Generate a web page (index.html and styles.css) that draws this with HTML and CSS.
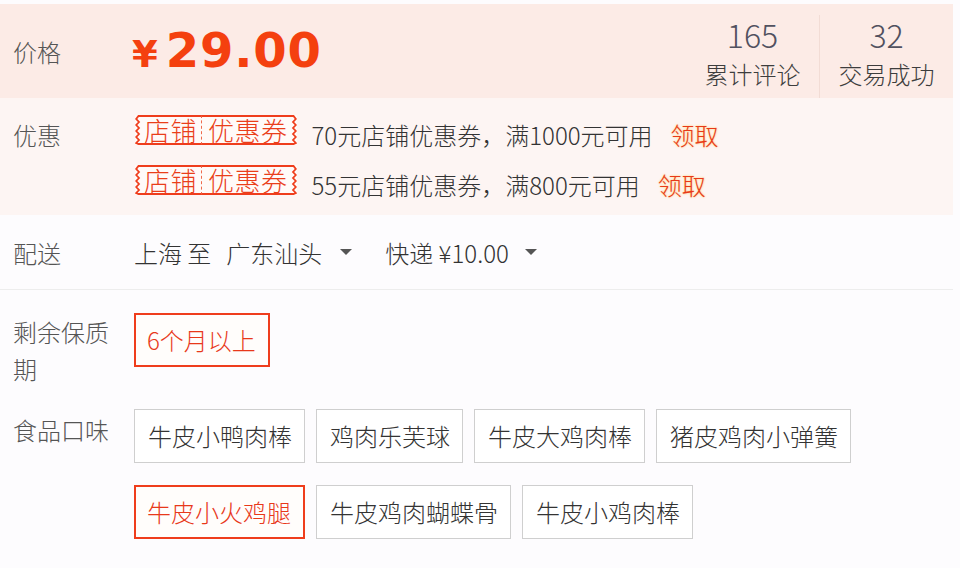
FILE: index.html
```html
<!DOCTYPE html>
<html lang="zh-CN">
<head>
<meta charset="utf-8">
<title>商品详情</title>
<link rel="stylesheet" href="styles.css">
</head>
<body>
<div class="page">
  <section class="panel">
    <div class="row price-row">
      <div class="label">价格</div>
      <div class="price"><span class="yen">¥</span><span class="amount">29.00</span></div>
      <div class="stats">
        <div class="stat"><div class="num">165</div><div class="cap">累计评论</div></div>
        <div class="stat stat-sep"><div class="num">32</div><div class="cap">交易成功</div></div>
      </div>
    </div>
    <div class="row coupon-row">
      <div class="label lh40">优惠</div>
      <div class="coupons">
        <div class="coupon">
          <span class="tag">
            <svg class="edge" width="6" height="30" viewBox="0 0 6 30"><path d="M6 1H3.5L1.2 4 4 7 1.2 10 4 13 1.2 16 4 19 1.2 22 4 25 1.2 28 3.5 29H6" fill="none" stroke="#ef3d1c" stroke-width="1.8"/></svg>
            <span class="tag-a">店铺</span><span class="tag-b">优惠券</span>
            <svg class="edge" width="6" height="30" viewBox="0 0 6 30"><path d="M0 1H2.5L4.8 4 2 7 4.8 10 2 13 4.8 16 2 19 4.8 22 2 25 4.8 28 2.5 29H0" fill="none" stroke="#ef3d1c" stroke-width="1.8"/></svg>
          </span>
          <span class="coupon-text">70元店铺优惠券，满1000元可用</span>
          <span class="take">领取</span>
        </div>
        <div class="coupon">
          <span class="tag">
            <svg class="edge" width="6" height="30" viewBox="0 0 6 30"><path d="M6 1H3.5L1.2 4 4 7 1.2 10 4 13 1.2 16 4 19 1.2 22 4 25 1.2 28 3.5 29H6" fill="none" stroke="#ef3d1c" stroke-width="1.8"/></svg>
            <span class="tag-a">店铺</span><span class="tag-b">优惠券</span>
            <svg class="edge" width="6" height="30" viewBox="0 0 6 30"><path d="M0 1H2.5L4.8 4 2 7 4.8 10 2 13 4.8 16 2 19 4.8 22 2 25 4.8 28 2.5 29H0" fill="none" stroke="#ef3d1c" stroke-width="1.8"/></svg>
          </span>
          <span class="coupon-text">55元店铺优惠券，满800元可用</span>
          <span class="take">领取</span>
        </div>
      </div>
    </div>
  </section>

  <div class="row ship-row">
    <div class="label">配送</div>
    <div class="ship">
      <span class="from">上海 至</span>
      <span class="dest">广东汕头</span>
      <span class="caret"></span>
      <span class="fee">快递 ¥10.00</span>
      <span class="caret"></span>
    </div>
  </div>

  <div class="row attr-row first">
    <div class="label lh37">剩余保质期</div>
    <div class="opts">
      <span class="opt sel">6个月以上</span>
    </div>
  </div>

  <div class="row attr-row">
    <div class="label lh37 pt2">食品口味</div>
    <div class="opts">
      <span class="opt">牛皮小鸭肉棒</span>
      <span class="opt">鸡肉乐芙球</span>
      <span class="opt">牛皮大鸡肉棒</span>
      <span class="opt">猪皮鸡肉小弹簧</span>
      <span class="opt sel">牛皮小火鸡腿</span>
      <span class="opt">牛皮鸡肉蝴蝶骨</span>
      <span class="opt">牛皮小鸡肉棒</span>
    </div>
  </div>
</div>
</body>
</html>
```

FILE: styles.css
```css
html, body {
  margin: 0;
  padding: 0;
  background: #fdfcfe;
}
body {
  font-family: "Noto Sans CJK SC", "Noto Sans", sans-serif;
  font-size: 24px;
  font-weight: 300;
  color: #333;
  padding-top: 4px;
}
.page {
  width: 953px;
}
.panel {
  background: #fdf5f3;
}
.row {
  display: flex;
}
.label {
  width: 107px;
  padding-left: 13px;
  flex: none;
  color: #555;
  margin-right: 14px;
}
.lh40 { line-height: 40px; }
.lh37 { line-height: 37px; }
.pt2 { padding-top: 2px; }

/* price */
.price-row {
  height: 94px;
  align-items: center;
  background: #fcebe6;
}
.price {
  color: #f4400f;
  font-family: "DejaVu Sans", sans-serif;
  font-weight: bold;
  display: flex;
  align-items: baseline;
  margin-left: -2px;
  margin-top: -3px;
}
.yen {
  font-size: 37px;
  margin-right: 8px;
}
.amount {
  font-size: 48px;
  letter-spacing: 0.8px;
}
.stats {
  margin-left: auto;
  align-self: flex-end;
  display: flex;
  height: 83px;
}
.stat {
  width: 133px;
  text-align: center;
}
.stat-sep {
  border-left: 1px solid #f2dcd5;
}
.num {
  font-size: 32px;
  line-height: 38px;
  color: #51515f;
}
.cap {
  margin-top: 6px;
  line-height: 30px;
  color: #3d3d3d;
}

/* coupons */
.coupon-row {
  padding: 17px 0 10px;
}
.coupons {
  display: flex;
  flex-direction: column;
  gap: 10px;
}
.coupon {
  display: flex;
  align-items: flex-start;
  height: 40px;
  line-height: 40px;
}
.tag {
  display: flex;
  height: 30px;
  margin-left: 1px;
  color: #ea3e1a;
  background: #fffaf8;
}
.edge {
  display: block;
  flex: none;
}
.tag-a, .tag-b {
  border-top: 2px solid #ef3d1c;
  border-bottom: 2px solid #ef3d1c;
  line-height: 26px;
  font-size: 26px;
  letter-spacing: 0.5px;
}
.tag-a {
  padding: 0 4px 0 3px;
  border-right: 1px dashed #ef6a4c;
}
.tag-b {
  padding: 0 3px 0 6px;
}
.coupon-text {
  margin-left: 15px;
  color: #333;
}
.take {
  margin-left: 18px;
  color: #e8381a;
  text-shadow: 0 0 2px rgba(255, 190, 60, 0.9);
}

/* shipping */
.ship-row {
  height: 74px;
  align-items: center;
  border-bottom: 1px solid #ededed;
}
.ship {
  display: flex;
  align-items: center;
  color: #333;
}
.dest {
  margin-left: 15px;
}
.caret {
  width: 0;
  height: 0;
  border-left: 6px solid transparent;
  border-right: 6px solid transparent;
  border-top: 6px solid #555;
  margin: 0 18px 0 18px;
}
.fee {
  margin-left: 15px;
}
.fee + .caret {
  margin-left: 16px;
}

/* attributes */
.attr-row {
  margin-top: 22px;
  align-items: flex-start;
}
.attr-row.first {
  margin-top: 23px;
}
.opts {
  display: flex;
  flex-wrap: wrap;
  gap: 22px 11px;
  width: 818px;
}
.opt {
  display: block;
  height: 52px;
  line-height: 52px;
  padding: 0 12px 0 13px;
  border: 1px solid #cfcfcf;
  background: #fff;
  color: #333;
}
.opt.sel {
  height: 50px;
  line-height: 50px;
  border: 2px solid #ef3d1c;
  color: #e8381a;
  padding: 0 12px 0 11px;
  background: #fffdfb;
}
```
